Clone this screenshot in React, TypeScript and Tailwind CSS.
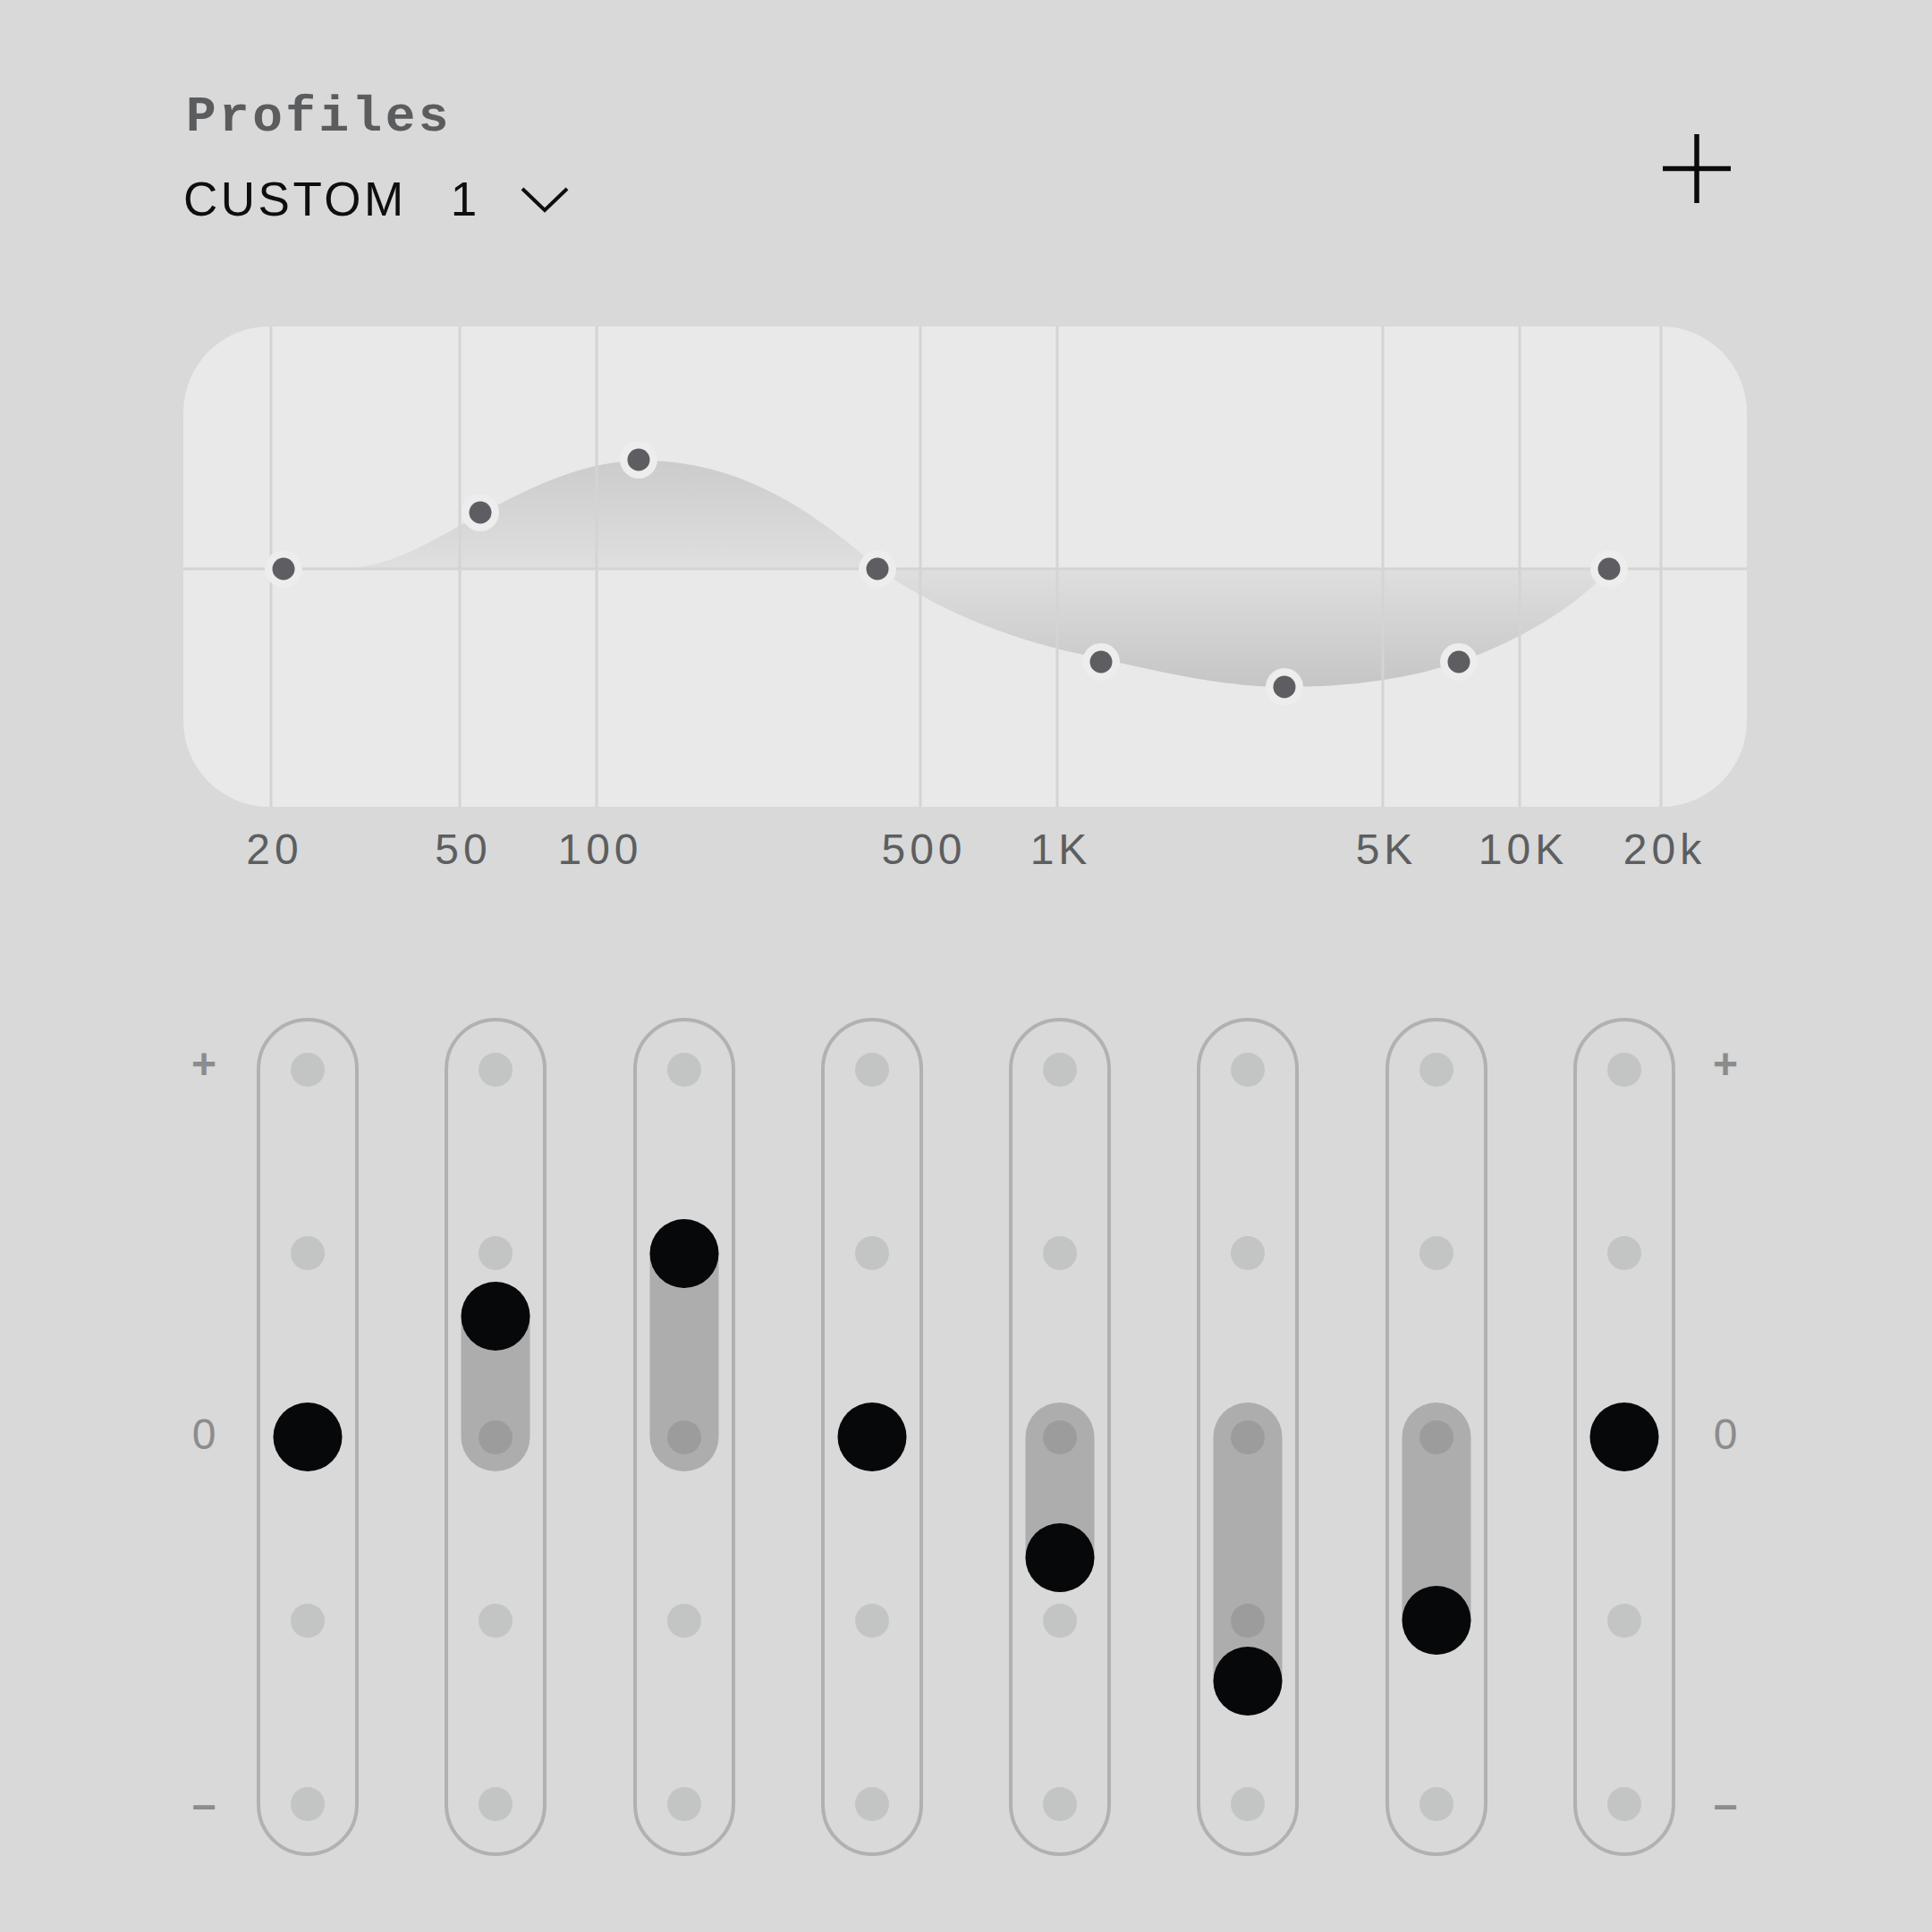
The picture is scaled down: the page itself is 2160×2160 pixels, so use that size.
import React from "react";

// Band positions on the log axis, in px from the card's left edge
const bands = [
  { label: "20", x: 98 },
  { label: "50", x: 309 },
  { label: "100", x: 462 },
  { label: "500", x: 824 },
  { label: "1K", x: 977 },
  { label: "5K", x: 1341 },
  { label: "10K", x: 1494 },
  { label: "20k", x: 1652 },
];

// Curve handles (x, y inside the chart)
const handles = [
  [112, 271],
  [332, 208],
  [509, 149],
  [776, 271],
  [1026, 375],
  [1231, 403],
  [1426, 375],
  [1594, 271],
];

// Slider gains, -2 .. +2 steps
const gains = [0, 0.66, 1, 0, -0.66, -1.33, -1, 0];

const ZERO_Y = 271;
const STEP = 205.25;
const RAIL_TOP = 54; // first dot centre inside the track's padding box
const KNOB = 77;

const curvePath =
  "M 112 271 L 170 271 C 230 271, 270 244, 332 210 C 395 176, 450 150, 515 150 C 620 150, 705 205, 777 271 C 845 318, 925 352, 1026 371 C 1115 392, 1175 403, 1231 403 C 1315 403, 1375 392, 1426 375 C 1480 357, 1555 318, 1594 271 Z";

function ResponseChart() {
  return (
    <div className="h-[537px] w-full overflow-hidden rounded-[96px] bg-[#e8e9e8]">
      <svg width="1748" height="537" viewBox="0 0 1748 537" className="block">
        <defs>
          <linearGradient id="eqFill" gradientUnits="userSpaceOnUse" x1="0" y1="140" x2="0" y2="410">
            <stop offset="0" stopColor="#c9cac9" />
            <stop offset="0.48" stopColor="#dedfde" />
            <stop offset="1" stopColor="#c3c4c3" />
          </linearGradient>
        </defs>
        <path d={curvePath} fill="url(#eqFill)" />
        {bands.map((b) => (
          <line key={b.label} x1={b.x} y1="0" x2={b.x} y2="537" stroke="#d3d4d4" strokeWidth="3" />
        ))}
        <line x1="0" y1={ZERO_Y} x2="1748" y2={ZERO_Y} stroke="#d3d4d4" strokeWidth="3" />
        {handles.map(([x, y], i) => (
          <g key={i}>
            <circle cx={x} cy={y} r="21" fill="#ecedec" />
            <circle cx={x} cy={y} r="12.5" fill="#5e5d62" />
          </g>
        ))}
      </svg>
    </div>
  );
}

function BandSlider({ gain }: { gain: number }) {
  const zeroC = RAIL_TOP + 2 * STEP;
  const knobC = RAIL_TOP + (2 - gain) * STEP;
  const top = Math.min(zeroC, knobC) - KNOB / 2;
  const height = Math.abs(zeroC - knobC) + KNOB;

  return (
    <div className="relative flex h-[937px] w-[114px] flex-col items-center justify-between rounded-full border-[4px] border-[#b0b1b1] py-[35px]">
      {[0, 1, 2, 3, 4].map((i) => (
        <div key={i} className="h-[38px] w-[38px] rounded-full bg-[#c3c4c4]" />
      ))}
      {gain !== 0 && (
        <div
          className="absolute left-1/2 w-[77px] -translate-x-1/2 rounded-full bg-black/20"
          style={{ top, height }}
        />
      )}
      <div
        className="absolute left-1/2 h-[77px] w-[77px] -translate-x-1/2 rounded-full bg-[#07080a]"
        style={{ top: knobC - KNOB / 2 }}
      />
    </div>
  );
}

function ScaleLabels() {
  return (
    <div className="flex h-[937px] w-[46px] flex-col items-center justify-between pt-[32px] pb-[37px] font-['Liberation_Sans',Arial,sans-serif] text-[48px] text-[#8b8c8d]">
      <span className="h-[40px] font-bold leading-[40px]">+</span>
      <span className="h-[40px] leading-[40px]">0</span>
      <span className="h-[40px] font-bold leading-[40px]">–</span>
    </div>
  );
}

export default function App() {
  return (
    <div className="min-h-screen w-full bg-[#d8d9d8]">
      <div className="ml-[205px] w-[1748px]">
        <header className="flex h-[365px] items-start justify-between pt-[103px]">
          <div className="flex flex-col">
            <h1 className="ml-[3px] font-['Liberation_Mono',monospace] text-[56px] font-bold leading-[56px] tracking-[3.5px] text-[#5b5c5e]">
              Profiles
            </h1>
            <button className="mt-[37px] flex items-center font-['Liberation_Sans',Arial,sans-serif] text-[53px] leading-[53px] text-[#0e0e0e]">
              <span className="tracking-[3.5px]">CUSTOM</span>
              <span className="ml-[49px]">1</span>
              <svg width="54" height="30" viewBox="0 0 54 30" className="ml-[49px]">
                <path d="M2 3 L27 27 L52 3" fill="none" stroke="#0e0e0e" strokeWidth="4" />
              </svg>
            </button>
          </div>
          <button className="mr-[18px] mt-[47px]">
            <svg width="76" height="77" viewBox="0 0 76 77" className="block">
              <line x1="0" y1="38.5" x2="76" y2="38.5" stroke="#0a0a0a" strokeWidth="5.5" />
              <line x1="38" y1="0" x2="38" y2="77" stroke="#0a0a0a" strokeWidth="5.5" />
            </svg>
          </button>
        </header>

        <ResponseChart />

        <div className="relative h-[236px] font-['Liberation_Sans',Arial,sans-serif] text-[48px] leading-[48px] tracking-[5px] text-[#5d5e60]">
          {bands.map((b) => (
            <span
              key={b.label}
              className="absolute top-[24px] -translate-x-1/2 whitespace-nowrap"
              style={{ left: b.x + 4 }}
            >
              {b.label}
            </span>
          ))}
        </div>

        <div className="flex">
          <ScaleLabels />
          <div className="ml-[36px] flex w-[1586px] justify-between">
            {gains.map((g, i) => (
              <BandSlider key={i} gain={g} />
            ))}
          </div>
          <div className="ml-[33px]">
            <ScaleLabels />
          </div>
        </div>
      </div>
    </div>
  );
}
